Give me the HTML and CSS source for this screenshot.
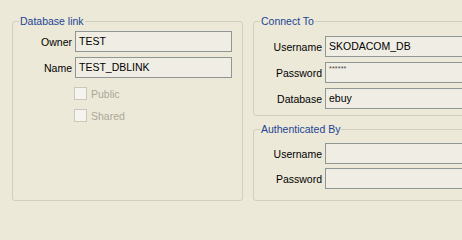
FILE: index.html
```html
<!DOCTYPE html>
<html>
<head>
<meta charset="utf-8">
<link rel="stylesheet" href="styles.css">
</head>
<body>
<div class="dialog">
  <fieldset class="group group-link">
    <legend>Database link</legend>
    <div class="form form-left">
      <span class="label">Owner</span><div class="field">TEST</div>
      <span class="label">Name</span><div class="field">TEST_DBLINK</div>
    </div>
    <div class="checks">
      <label class="check"><span class="box"></span>Public</label>
      <label class="check"><span class="box"></span>Shared</label>
    </div>
  </fieldset>
  <div class="column">
    <fieldset class="group group-connect">
      <legend>Connect To</legend>
      <div class="form form-right">
        <span class="label">Username</span><div class="field">SKODACOM_DB</div>
        <span class="label">Password</span><div class="field pw">******</div>
        <span class="label">Database</span><div class="field">ebuy</div>
      </div>
    </fieldset>
    <fieldset class="group group-auth">
      <legend>Authenticated By</legend>
      <div class="form form-right form-tight">
        <span class="label">Username</span><div class="field"></div>
        <span class="label">Password</span><div class="field"></div>
      </div>
    </fieldset>
  </div>
</div>
</body>
</html>
```
FILE: styles.css
```css
html, body {
  margin: 0;
  padding: 0;
  background: #ece9d8;
  overflow: hidden;
}
body {
  width: 462px;
  height: 207px;
  font-family: "Liberation Sans", Arial, sans-serif;
  font-size: 10.5px;
  color: #000;
}
.dialog {
  display: flex;
  gap: 10px;
  padding: 15px 0 0 12px;
  height: 207px;
  width: 462px;
  box-sizing: border-box;
  overflow: hidden;
}
.group {
  margin: 0;
  padding: 0;
  border: 1px solid #d0cebf;
  border-radius: 3px;
  min-width: 0;
  box-sizing: border-box;
}
.group legend {
  margin-left: 6px;
  padding: 0 1px;
  color: #1d4395;
  line-height: 13px;
  height: 13px;
}
.group-link {
  flex: none;
  width: 231px;
  height: 186px;
}
.column {
  flex: none;
  display: flex;
  flex-direction: column;
  width: 231px;
  height: 186px;
}
.group-connect {
  padding-bottom: 6px;
}
.group-auth {
  margin-top: 7px;
  flex: 1;
}
.form {
  display: grid;
  align-items: center;
  column-gap: 3px;
}
.form-left {
  grid-template-columns: 59px 157px;
  row-gap: 5px;
  padding-top: 3px;
}
.form-right {
  grid-template-columns: 68px 157px;
  row-gap: 5px;
  padding-top: 8px;
}
.form-tight {
  row-gap: 4px;
  padding-top: 7px;
}
.label {
  text-align: right;
  white-space: nowrap;
}
.field {
  height: 21px;
  box-sizing: border-box;
  border: 1px solid #8e9793;
  background: #f0eee4;
  padding: 0 3px;
  line-height: 19px;
  white-space: nowrap;
  overflow: hidden;
}
.field.pw {
  font-size: 7px;
  line-height: 12px;
  color: #444;
  letter-spacing: 0.2px;
}
.checks {
  display: flex;
  flex-direction: column;
  gap: 9px;
  padding: 9px 0 0 61px;
}
.check {
  display: flex;
  align-items: center;
  gap: 4px;
  height: 13px;
  color: #aca899;
}
.box {
  width: 13px;
  height: 13px;
  box-sizing: border-box;
  border: 1px solid #cac8bb;
  background: #f5f4ee;
}
```
